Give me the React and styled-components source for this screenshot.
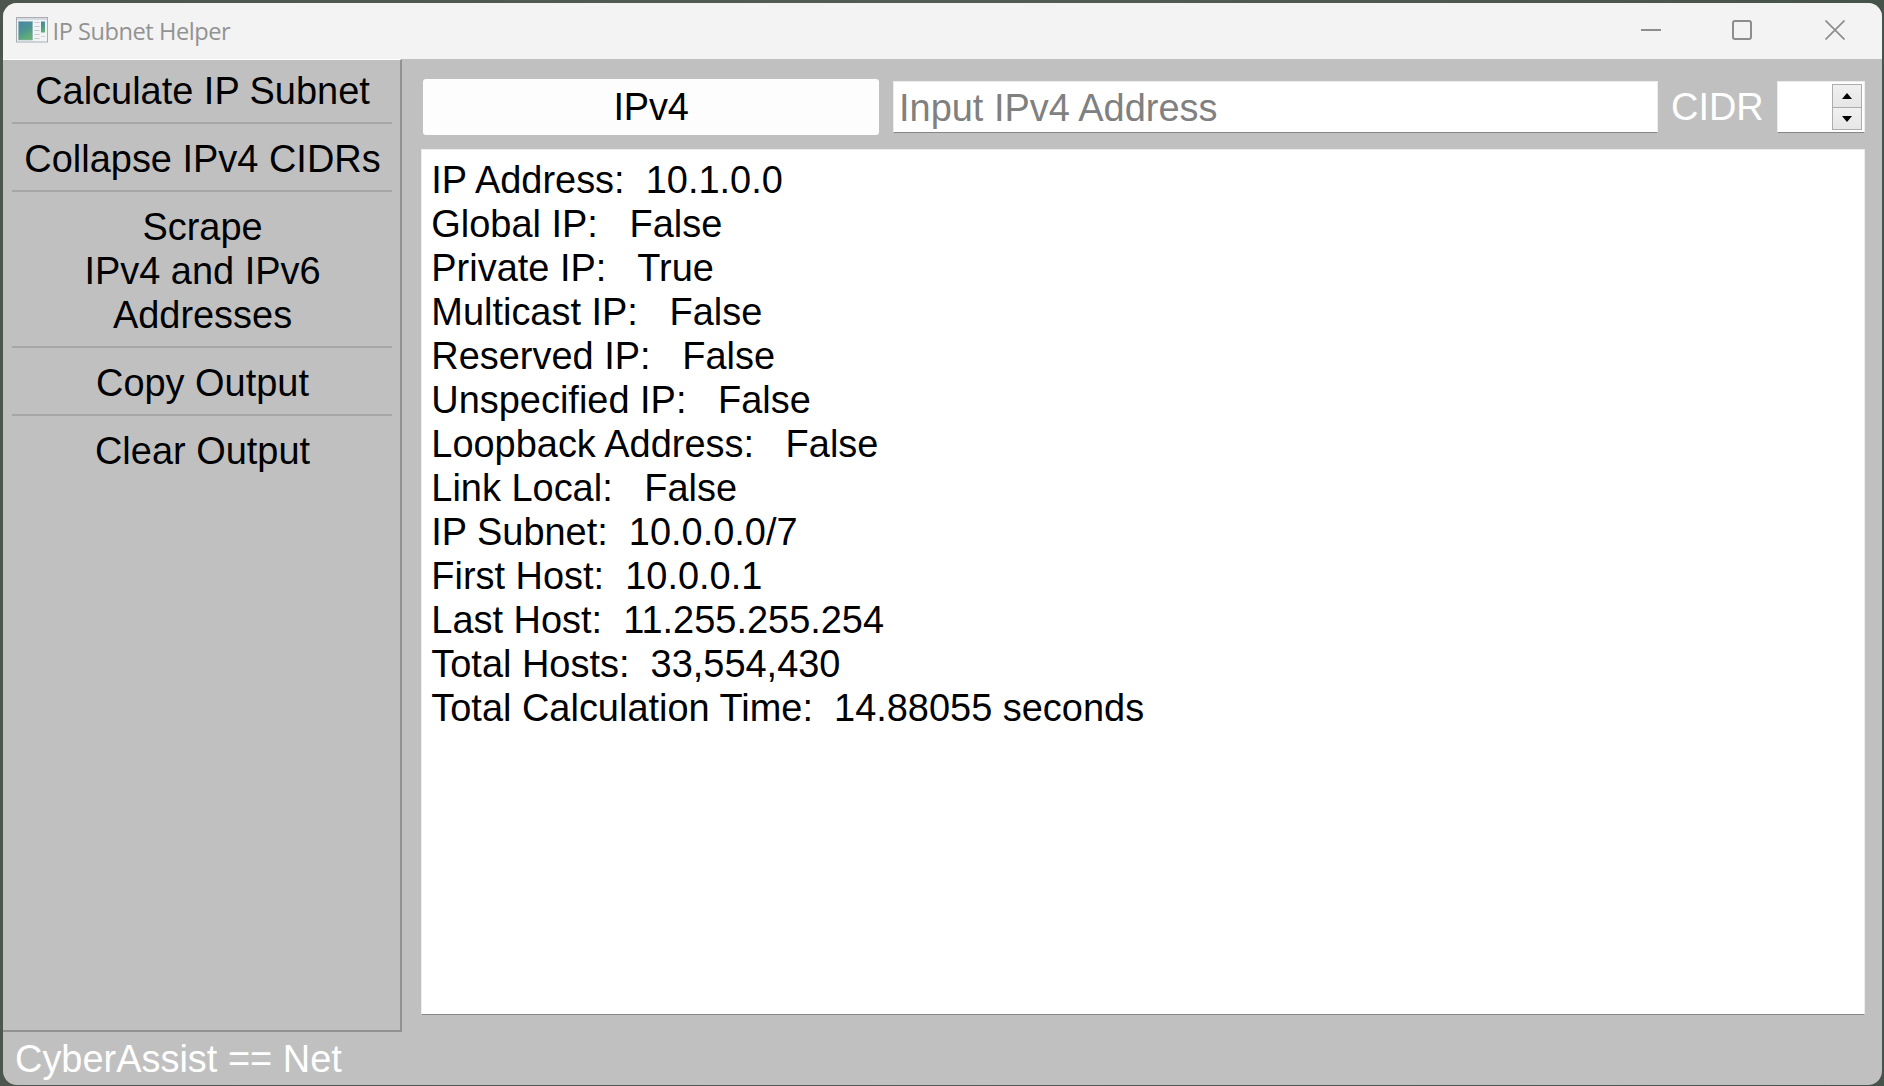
import React from 'react';
import styled, { createGlobalStyle } from 'styled-components';

const Global = createGlobalStyle`
  * { box-sizing: border-box; }
  html, body, #root { height: 100%; }
  body { margin: 0; overflow: hidden; background: #4f5b52; }
`;

const Desktop = styled.div`
  height: 100%;
  padding: 3px 2px 1px 3px;
  background: linear-gradient(90deg, #4c564e, #535c54 50%, #46534b);
  font-family: 'Liberation Sans', Arial, sans-serif;
  font-size: 37.95px;
  line-height: 44px;
  color: #000;
`;
const Window = styled.div`
  height: 100%;
  display: flex;
  flex-direction: column;
  border-radius: 14px;
  overflow: hidden;
  background: #c0c0c0;
`;
const TitleBar = styled.header`
  height: 56px;
  flex: none;
  display: flex;
  align-items: center;
  padding: 0 37px 2px 13px;
  background: #f3f3f3;
`;
const Title = styled.h1`
  margin: 2px 0 0 4.5px;
  flex: 1;
  font: 400 23.6px/32px 'Open Sans', 'Noto Sans', sans-serif;
  letter-spacing: -0.45px;
  color: #929292;
`;
const Controls = styled.div`
  display: flex;
  align-items: center;
  svg { display: block; }
  svg + svg { margin-left: 71px; }
  svg + svg + svg { margin-left: 73px; }
`;
const Body = styled.div`
  flex: 1;
  display: flex;
  min-height: 0;
`;
const Sidebar = styled.nav`
  width: 399px;
  border-top: 1px solid #fff;
  border-right: 2px solid #929292;
  border-bottom: 2px solid #929292;
  padding: 0 8px 0 9px;
  display: flex;
  flex-direction: column;
`;
const Action = styled.button`
  appearance: none;
  border: 0;
  border-bottom: 2px solid ${(p) => (p.$last ? 'transparent' : '#a6a6a6')};
  background: none;
  padding: ${(p) => (p.$first ? 9 : 13)}px 0 9px 1px;
  font: inherit;
  color: inherit;
  text-align: center;
  white-space: pre;
`;
const Main = styled.main`
  flex: 1;
  min-width: 0;
  display: flex;
  flex-direction: column;
  padding: 20px 17px 0 19px;
`;
const Toolbar = styled.div`
  height: 56px;
  display: flex;
  align-items: center;
  padding-left: 2px;
`;
const Version = styled.button`
  width: 456px;
  height: 56px;
  border: 0;
  border-radius: 3px;
  padding: 0 0 1px;
  background: #fdfdfd;
  font: inherit;
  letter-spacing: -0.2px;
  color: inherit;
`;
const Address = styled.input`
  width: 765px;
  height: 52px;
  margin-left: 14px;
  border: 1px solid #ececec;
  border-bottom-color: #868686;
  border-radius: 1px;
  padding: 2px 0 0 5px;
  background: #fff;
  font: inherit;
  outline: 0;
  &::placeholder { color: #808080; opacity: 1; }
`;
const Label = styled.label`
  width: 119px;
  padding: 0 0 1px 13px;
  color: #fff;
`;
const Spin = styled.div`
  width: 88px;
  height: 52px;
  display: flex;
  justify-content: flex-end;
  padding: 2px 2px 2px 0;
  background: #fff;
  border: 1px solid #ececec;
  border-bottom-color: #868686;
  border-radius: 1px;
`;
const Steps = styled.div`
  width: 30px;
  height: 46px;
  display: grid;
  grid-template-rows: 23px 1fr;
  border: 1px solid #adadad;
`;
const Step = styled.div`
  display: grid;
  place-items: center;
  background: linear-gradient(#f0f0f0, #e6e6e6);
  border-bottom: ${(p) => (p.$up ? '1px solid #adadad' : '0')};
  svg { display: block; }
`;
const Output = styled.section`
  margin-top: 14px;
  height: 866px;
  border: 1px solid #ececec;
  border-bottom-color: #868686;
  border-radius: 1px;
  background: #fff;
  padding: 8px 0 0 9.3px;
`;
const Line = styled.div`
  height: 44px;
  white-space: pre;
`;
const Status = styled.footer`
  height: 53px;
  flex: none;
  padding: 5px 0 0 12px;
  color: #fff;
`;

const actions = [
  'Calculate IP Subnet',
  'Collapse IPv4 CIDRs',
  'Scrape\nIPv4 and IPv6\nAddresses',
  'Copy Output',
  'Clear Output',
];
const lines = [
  'IP Address:  10.1.0.0',
  'Global IP:   False',
  'Private IP:   True',
  'Multicast IP:   False',
  'Reserved IP:   False',
  'Unspecified IP:   False',
  'Loopback Address:   False',
  'Link Local:   False',
  'IP Subnet:  10.0.0.0/7',
  'First Host:  10.0.0.1',
  'Last Host:  11.255.255.254',
  'Total Hosts:  33,554,430',
  'Total Calculation Time:  14.88055 seconds',
];

const AppIcon = () => (
  <svg width="32" height="26" viewBox="0 0 32 26">
    <defs>
      <linearGradient id="screen" x1="0.2" y1="0" x2="0.6" y2="1">
        <stop offset="0" stopColor="#4a86a6" />
        <stop offset="0.5" stopColor="#4b9690" />
        <stop offset="1" stopColor="#68b173" />
      </linearGradient>
    </defs>
    <rect x="0.5" y="0.5" width="31" height="24.500" fill="#f1f3f5" stroke="#a9adb3" />
    <rect x="1" y="1" width="30" height="2" fill="#d5dbe3" />
    <rect x="2.500" y="4.500" width="14" height="18.500" fill="url(#screen)" stroke="#8fb3b8" strokeWidth="0.600" />
    <path d="M18.500 5.500h5M18.500 9.500h5M18.500 13.500h5M18.500 17.500h5M18.500 21.500h5" stroke="#c6c9cd" />
    <rect x="25" y="4.500" width="4" height="11" fill="url(#screen)" />
    <path d="M25 19.500h4" stroke="#d4d6d9" />
  </svg>
);

export default function App() {
  return (
    <>
      <Global />
      <Desktop>
        <Window>
          <TitleBar>
            <AppIcon />
            <Title>IP Subnet Helper</Title>
            <Controls>
              <svg width="20" height="20"><path d="M0 10h20" stroke="#8d8d8d" strokeWidth="2" /></svg>
              <svg width="20" height="20"><rect x="1" y="1" width="18" height="18" rx="2" fill="none" stroke="#8d8d8d" strokeWidth="2" /></svg>
              <svg width="20" height="20"><path d="M.5 .5l19 19M19.500 .5l-19 19" stroke="#8d8d8d" strokeWidth="1.700" /></svg>
            </Controls>
          </TitleBar>
          <Body>
            <Sidebar>
              {actions.map((text, i) => (
                <Action key={text} $first={i === 0} $last={i === actions.length - 1}>
                  {text}
                </Action>
              ))}
            </Sidebar>
            <Main>
              <Toolbar>
                <Version>IPv4</Version>
                <Address placeholder="Input IPv4 Address" />
                <Label>CIDR</Label>
                <Spin>
                  <Steps>
                    <Step $up><svg width="10" height="6"><path d="M0 6L5 0l5 6z" /></svg></Step>
                    <Step><svg width="10" height="6"><path d="M0 0h10L5 6z" /></svg></Step>
                  </Steps>
                </Spin>
              </Toolbar>
              <Output>
                {lines.map((text) => <Line key={text}>{text}</Line>)}
              </Output>
            </Main>
          </Body>
          <Status>CyberAssist == Net</Status>
        </Window>
      </Desktop>
    </>
  );
}
